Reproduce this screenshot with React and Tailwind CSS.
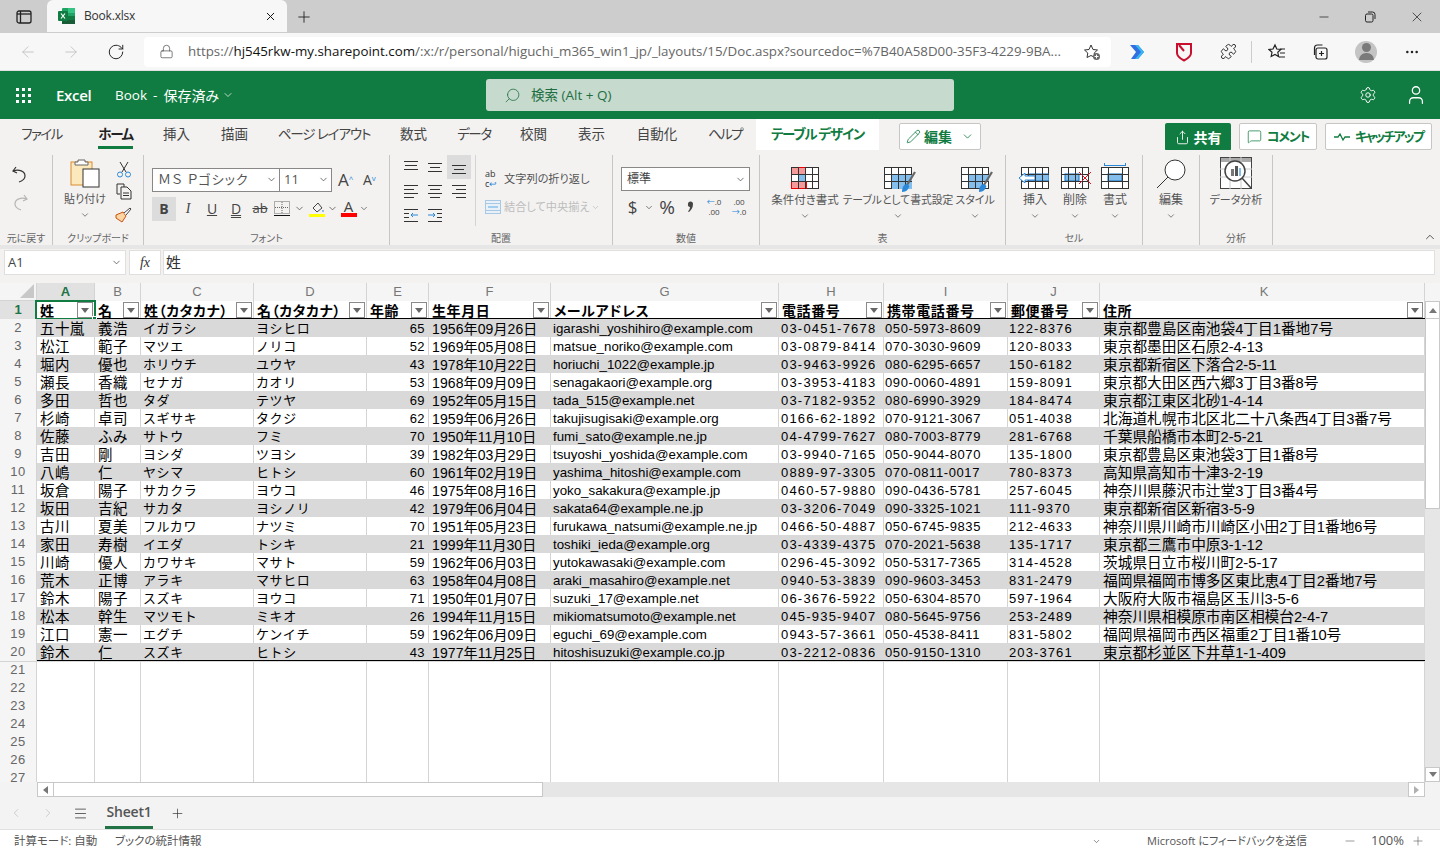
import React from "react";
import { ArrowLeft, ArrowRight, RotateCw, Lock, X, Plus, Minus, Settings, User, Search, ChevronDown, ChevronUp, ChevronLeft, ChevronRight, Puzzle, Pencil, Menu, MoreHorizontal, MessageSquare, Share } from "lucide-react";

const ui = "font-['Open_Sans','Noto_Sans_CJK_JP',sans-serif] [font-feature-settings:'palt']";
const Chev = ({ c = "text-[#444]" }) => <ChevronDown size={11} strokeWidth={1.6} className={c} />;

const widths = [58, 46, 113, 113, 62, 122, 228, 105, 124, 92, 325];
const letters = ["A", "B", "C", "D", "E", "F", "G", "H", "I", "J", "K"];
const heads = ["姓", "名", "姓（カタカナ）", "名（カタカナ）", "年齢", "生年月日", "メールアドレス", "電話番号", "携帯電話番号", "郵便番号", "住所"];
const cellCls = [
  "text-[14.5px] tracking-[0.4px] pl-[3px]",
  "text-[14.5px] tracking-[0.4px] pl-[3px]",
  "text-[13px] tracking-[0.6px] pl-[2px]",
  "text-[13px] tracking-[0.6px] pl-[2px]",
  "text-[13px] tracking-[0.4px] text-right pr-[3px]",
  "text-[14px] tracking-[0.1px] pl-[3px]",
  "text-[13.3px] tracking-[0px] pl-[2px]",
  "text-[13px] tracking-[1.2px] pl-[2px]",
  "text-[13px] tracking-[0.6px] pl-[1px]",
  "text-[13px] tracking-[1.1px] pl-[1px]",
  "text-[14.7px] tracking-[0px] pl-[3px]",
];
const data = `五十嵐|義浩|イガラシ|ヨシヒロ|65|1956年09月26日|igarashi_yoshihiro@example.com|03-0451-7678|050-5973-8609|122-8376|東京都豊島区南池袋4丁目1番地7号
松江|範子|マツエ|ノリコ|52|1969年05月08日|matsue_noriko@example.com|03-0879-8414|070-3030-9609|120-8033|東京都墨田区石原2-4-13
堀内|優也|ホリウチ|ユウヤ|43|1978年10月22日|horiuchi_1022@example.jp|03-9463-9926|080-6295-6657|150-6182|東京都新宿区下落合2-5-11
瀬長|香織|セナガ|カオリ|53|1968年09月09日|senagakaori@example.org|03-3953-4183|090-0060-4891|159-8091|東京都大田区西六郷3丁目3番8号
多田|哲也|タダ|テツヤ|69|1952年05月15日|tada_515@example.net|03-7182-9352|080-6990-3929|184-8474|東京都江東区北砂1-4-14
杉崎|卓司|スギサキ|タクジ|62|1959年06月26日|takujisugisaki@example.org|0166-62-1892|070-9121-3067|051-4038|北海道札幌市北区北二十八条西4丁目3番7号
佐藤|ふみ|サトウ|フミ|70|1950年11月10日|fumi_sato@example.ne.jp|04-4799-7627|080-7003-8779|281-6768|千葉県船橋市本町2-5-21
吉田|剛|ヨシダ|ツヨシ|39|1982年03月29日|tsuyoshi_yoshida@example.com|03-9940-7165|050-9044-8070|135-1800|東京都豊島区東池袋3丁目1番8号
八嶋|仁|ヤシマ|ヒトシ|60|1961年02月19日|yashima_hitoshi@example.com|0889-97-3305|070-0811-0017|780-8373|高知県高知市十津3-2-19
坂倉|陽子|サカクラ|ヨウコ|46|1975年08月16日|yoko_sakakura@example.jp|0460-57-9880|090-0436-5781|257-6045|神奈川県藤沢市辻堂3丁目3番4号
坂田|吉紀|サカタ|ヨシノリ|42|1979年06月04日|sakata64@example.ne.jp|03-3206-7049|090-3325-1021|111-9370|東京都新宿区新宿3-5-9
古川|夏美|フルカワ|ナツミ|70|1951年05月23日|furukawa_natsumi@example.ne.jp|0466-50-4887|050-6745-9835|212-4633|神奈川県川崎市川崎区小田2丁目1番地6号
家田|寿樹|イエダ|トシキ|21|1999年11月30日|toshiki_ieda@example.org|03-4339-4375|070-2021-5638|135-1717|東京都三鷹市中原3-1-12
川崎|優人|カワサキ|マサト|59|1962年06月03日|yutokawasaki@example.com|0296-45-3092|050-5317-7365|314-4528|茨城県日立市桜川町2-5-17
荒木|正博|アラキ|マサヒロ|63|1958年04月08日|araki_masahiro@example.net|0940-53-3839|090-9603-3453|831-2479|福岡県福岡市博多区東比恵4丁目2番地7号
鈴木|陽子|スズキ|ヨウコ|71|1950年01月07日|suzuki_17@example.net|06-3676-5922|050-6304-8570|597-1964|大阪府大阪市福島区玉川3-5-6
松本|幹生|マツモト|ミキオ|26|1994年11月15日|mikiomatsumoto@example.net|045-935-9407|080-5645-9756|253-2489|神奈川県相模原市南区相模台2-4-7
江口|憲一|エグチ|ケンイチ|59|1962年06月09日|eguchi_69@example.com|0943-57-3661|050-4538-8411|831-5802|福岡県福岡市西区福重2丁目1番10号
鈴木|仁|スズキ|ヒトシ|43|1977年11月25日|hitoshisuzuki@example.co.jp|03-2212-0836|050-9150-1310|203-3761|東京都杉並区下井草1-1-409`.split("\n").map((l) => l.split("|"));

const gridCols = "grid grid-cols-[37px_58px_46px_113px_113px_62px_122px_228px_105px_124px_92px_325px]";

function XlsIcon() {
  return (
    <svg width="18" height="16" viewBox="0 0 18 16">
      <rect x="4" y="0" width="13" height="16" rx="1" fill="#21a366" />
      <rect x="10" y="0" width="7" height="5" fill="#33c481" />
      <rect x="10" y="8" width="7" height="4" fill="#107c41" />
      <rect x="4" y="12" width="13" height="4" fill="#185c37" />
      <rect x="0" y="3" width="10" height="10" rx="1" fill="#107c41" />
      <path d="M3 5.5l4 5M7 5.5l-4 5" stroke="#fff" strokeWidth="1.2" />
    </svg>
  );
}

function TitleBar() {
  return (
    <div className="flex h-[33px] bg-[#cdcdcd] items-end shrink-0">
      <div className="w-[47px] h-full flex items-center justify-center">
        <svg width="16" height="14" viewBox="0 0 16 14" fill="none" stroke="#222" strokeWidth="1.3"><rect x="1" y="1" width="14" height="12" rx="2" /><path d="M4.5 1v12" /><path d="M1 4h14" /></svg>
      </div>
      <div className="w-[240px] h-[32px] mb-[1px] bg-[#f7f7f7] rounded-t-[6px] flex items-center pl-[11px] pr-[10px]">
        <XlsIcon />
        <span className={`ml-[8px] flex-1 text-[12px] text-[#333] tracking-[-0.2px] ${ui}`}>Book.xlsx</span>
        <X size={13} strokeWidth={1.8} className="text-[#111]" />
      </div>
      <div className="w-[34px] h-full flex items-center justify-center"><Plus size={18} strokeWidth={1.2} className="text-[#222]" /></div>
      <div className="flex-1" />
      <div className="h-full flex items-center pr-[15px] gap-[33px] text-[#222]">
        <Minus size={14} strokeWidth={1.3} />
        <svg width="12" height="12" viewBox="0 0 12 12" fill="none" stroke="#222" strokeWidth="1"><rect x="1.5" y="3" width="7.5" height="8" rx="1.5" /><path d="M4 1h4.5A2.5 2.5 0 0 1 11 3.5V8" /></svg>
        <X size={16} strokeWidth={1.1} />
      </div>
    </div>
  );
}

function AddrBar() {
  return (
    <div className="flex h-[38px] bg-[#f7f7f7] items-center shrink-0 border-b border-[#e0e0e0]">
      <div className="w-[144px] flex items-center pl-[19px]">
        <ArrowLeft size={18} strokeWidth={1.1} className="text-[#bdbdbd]" />
        <ArrowRight size={18} strokeWidth={1.1} className="text-[#bdbdbd] ml-[25px]" />
        <RotateCw size={18} strokeWidth={1.3} className="text-[#222] ml-[27px]" />
      </div>
      <div className="w-[967px] h-[30px] bg-white rounded-[4px] flex items-center pl-[15px] pr-[10px]">
        <Lock size={15} strokeWidth={1.1} className="text-[#444]" />
        <span className="ml-[14px] flex-1 text-[13.34px] text-[#666] whitespace-nowrap overflow-hidden font-['Open_Sans',sans-serif]">
          https://<span className="text-[#111]">hj545rkw-my.sharepoint.com</span>/:x:/r/personal/higuchi_m365_win1_jp/_layouts/15/Doc.aspx?sourcedoc=%7B40A58D00-35F3-4229-9BA...
        </span>
        <svg width="18" height="18" viewBox="0 0 18 18" fill="none" stroke="#333" strokeWidth="1" className="ml-[14px]"><path d="M8 2l2 4.5 4.5.5-3.300 3 .8 4.500L8 12.500 4 14.500l.8-4.500L1.500 7 6 6.500z" /><circle cx="13.500" cy="13.500" r="3.500" fill="#666" stroke="none" /><path d="M13.500 11.500v4M11.500 13.500h4" stroke="#fff" /></svg>
      </div>
      <div className="flex-1 flex items-center pl-[19px]">
        <svg width="18" height="16" viewBox="0 0 18 16"><path d="M0 1h8l6 7-6 7H1l5-7z" fill="#2f6fe0" /><path d="M8 1l6 7-6 7H5l6-7-6-7z" fill="#38b6f2" /></svg>
        <svg width="18" height="20" viewBox="0 0 18 20" fill="none" className="ml-[27px]"><path d="M2 2h14v9c0 4-4 6-7 7.500C6 17 2 15 2 11z" stroke="#c8102e" strokeWidth="2" /><path d="M4 3l5 6" stroke="#c8102e" strokeWidth="2" /></svg>
        <Puzzle size={17} strokeWidth={1.3} className="ml-[27px] text-[#222]" />
        <div className="w-[1px] h-[22px] bg-[#ccc] ml-[14px]" />
        <svg width="18" height="18" viewBox="0 0 18 18" fill="none" stroke="#222" strokeWidth="1.2" className="ml-[16px]"><path d="M7 2l1.800 4 4 .5-3 2.800.8 4.200L7 11.500 3.200 13.500 4 9.300 1 6.500l4-.5z" /><path d="M12 6h5M12 10h5M11 14h6" /></svg>
        <svg width="18" height="18" viewBox="0 0 18 18" fill="none" stroke="#222" strokeWidth="1.2" className="ml-[25px]"><rect x="5" y="5" width="11" height="11" rx="2" /><path d="M3.500 12V5a3 3 0 0 1 3-3h5" /><path d="M10.500 8v5M8 10.500h5" /></svg>
        <div className="ml-[26px] w-[22px] h-[22px] rounded-full bg-[#c4c4c4] flex flex-col items-center justify-center overflow-hidden">
          <div className="w-[9px] h-[9px] rounded-full bg-[#7a7a7a]" />
          <div className="w-[15px] h-[7px] rounded-t-full bg-[#7a7a7a] mt-[1px]" />
        </div>
        <MoreHorizontal size={16} strokeWidth={1.8} className="ml-[27px] text-[#222]" />
      </div>
    </div>
  );
}

function GreenBar() {
  return (
    <div className={`flex h-[48px] bg-[#107c41] items-center text-white shrink-0 ${ui}`}>
      <div className="w-[47px] flex justify-center">
        <div className="grid grid-cols-3 gap-[3px]">
          {Array.from({ length: 9 }).map((_, i) => <div key={i} className="w-[3px] h-[3px] bg-white" />)}
        </div>
      </div>
      <span className="w-[68px] pl-[9px] text-[15px] font-semibold tracking-[-0.3px]">Excel</span>
      <span className="w-[371px] text-[13.5px] flex items-center">Book<span className="mx-[6px]">-</span><span className="text-[14px]">保存済み</span><ChevronDown size={12} strokeWidth={1.4} className="ml-[3px]" /></span>
      <div className="w-[468px] h-[32px] rounded-[3px] bg-[#c6dacd] flex items-center pl-[18px] text-[#1e6e42] text-[13.5px]">
        <Search size={17} strokeWidth={1.1} className="scale-x-[-1]" />
        <span className="ml-[10px]">検索 (Alt + Q)</span>
      </div>
      <div className="flex-1 flex justify-end items-center pr-[13px] gap-[28px]">
        <Settings size={18} strokeWidth={1.3} />
        <User size={22} strokeWidth={1.4} />
      </div>
    </div>
  );
}

const Tab = ({ w, children, active, t = "" }) => (
  <div className={`${w} h-full flex flex-col items-center justify-center relative shrink-0`}>
    <span className={`${active ? "text-[13.5px] text-[#222] font-bold whitespace-nowrap" : "text-[13.5px] text-[#444] whitespace-nowrap"} ${t}`}>{children}</span>
    {active && <div className="absolute bottom-[1px] left-0 right-0 h-[3px] bg-[#107c41]" />}
  </div>
);

function TabRow() {
  return (
    <div className={`flex h-[31px] bg-[#f3f2f1] items-stretch pl-[22px] shrink-0 ${ui}`}>
      <Tab w="w-[39px]" t="tracking-[-1.6px]">ファイル</Tab>
      <Tab w="w-[35px] ml-[37px]" t="tracking-[-1.3px]" active>ホーム</Tab>
      <Tab w="w-[27px] ml-[30px]">挿入</Tab>
      <Tab w="w-[27px] ml-[31px]">描画</Tab>
      <Tab w="w-[92px] ml-[30px]" t="tracking-[-1.1px]">ページ レイアウト</Tab>
      <Tab w="w-[27px] ml-[30px]">数式</Tab>
      <Tab w="w-[34px] ml-[30px]" t="tracking-[-1.3px]">データ</Tab>
      <Tab w="w-[27px] ml-[29px]">校閲</Tab>
      <Tab w="w-[27px] ml-[31px]">表示</Tab>
      <Tab w="w-[40px] ml-[32px]">自動化</Tab>
      <Tab w="w-[34px] ml-[31px]" t="tracking-[-1.7px]">ヘルプ</Tab>
      <div className="ml-[14px] w-[123px] bg-white flex items-center justify-center text-[13.5px] font-bold text-[#107c41] whitespace-nowrap tracking-[-1.3px]">テーブル デザイン</div>
      <div className="ml-[20px] mt-[4px] w-[82px] h-[27px] bg-white border border-[#c8c6c4] rounded-[2px] flex items-center justify-center gap-[3px] text-[#107c41] text-[14px] font-bold">
        <Pencil size={15} strokeWidth={1.3} />編集<ChevronDown size={13} strokeWidth={1.5} className="ml-[6px]" />
      </div>
      <div className="ml-[184px] mt-[4px] w-[66px] h-[28px] bg-[#107c41] rounded-[2px] flex items-center justify-center gap-[4px] text-white text-[14px] font-bold">
        <Share size={15} strokeWidth={1.4} />共有
      </div>
      <div className="ml-[8px] mt-[4px] w-[78px] h-[27px] bg-white border border-[#c8c6c4] rounded-[2px] flex items-center justify-center gap-[5px] text-[#107c41] text-[13px] font-bold whitespace-nowrap tracking-[-1.2px]">
        <MessageSquare size={15} strokeWidth={1.2} />コメント
      </div>
      <div className="ml-[8px] mt-[4px] w-[107px] h-[27px] bg-white border border-[#c8c6c4] rounded-[2px] flex items-center justify-center gap-[5px] text-[#107c41] text-[13px] font-bold whitespace-nowrap tracking-[-1.9px]">
        <svg width="16" height="10" viewBox="0 0 16 10" fill="none" stroke="#107c41" strokeWidth="1.300"><path d="M0 5h4l2-3 3 6 2-3h5" /></svg>キャッチアップ
      </div>
    </div>
  );
}

const Group = ({ w, label, children }) => (
  <div className={`${w} h-[90px] flex flex-col shrink-0 border-r border-[#c8c6c4]`}>
    <div className="flex-1 min-h-0 relative">{children}</div>
    <div className="h-[14px] text-[10px] leading-[14px] text-[#666] text-center whitespace-nowrap">{label}</div>
  </div>
);

const TinyIcon = ({ w = 24, children, cls = "" }) => (
  <div className={`h-[24px] flex items-center justify-center shrink-0 ${cls}`} style={{ width: w }}>{children}</div>
);

const AlignIcon = ({ lines, children }) => (
  <svg width="16" height="14" viewBox="0 0 16 14" stroke="#333" strokeWidth="1" fill="none">
    {lines.map((l, i) => <path key={i} d={`M${l[0]} ${l[1] + 0.5}h${l[2]}`} />)}
    {children}
  </svg>
);

const BigBtn = ({ w, label, icon, noChev, size = "text-[12px]" }) => (
  <div className={`${w} flex flex-col items-center shrink-0`}>
    <div className="h-[33px] flex items-end justify-center">{icon}</div>
    <div className={`mt-[2px] ${size} leading-[18px] text-[#555] whitespace-nowrap`}>{label}</div>
    {!noChev && <ChevronDown size={10} strokeWidth={1.6} className="mt-[2px] text-[#444]" />}
  </div>
);

const GridSvg = ({ children, w = 36, h = 27, cols = [9, 18, 27], rows = [9, 18] }) => (
  <svg width={w} height={h} viewBox={`0 0 ${w} ${h}`} fill="none">
    <rect x=".5" y=".5" width={w - 1} height={h - 1} fill="#fff" stroke="#333" />
    {children}
    {cols.map((c) => <path key={c} d={`M${c}.5 0v${h}`} stroke="#333" />)}
    {rows.map((r) => <path key={r} d={`M0 ${r}.5h${w}`} stroke="#333" />)}
  </svg>
);

const Brush = () => (
  <svg width="16" height="22" viewBox="0 0 16 22" className="absolute right-[-5px] bottom-[-4px]"><path d="M14 1L6 14" stroke="#666" strokeWidth="2.200" /><path d="M1 21c0-5 2-8 5-8l2.500 2c-1 3-3 6-7.500 6z" fill="#2b88d8" /></svg>
);

function Ribbon() {
  return (
    <div className={`h-[95px] bg-[#f3f2f1] flex pt-[5px] shrink-0 relative ${ui}`}>
      <Group w="w-[53px]" label="元に戻す">
        <div className="flex flex-col items-center pt-[10px] pr-[12px] gap-[10px]">
          <svg width="18" height="18" viewBox="0 0 18 18" fill="none" stroke="#333" strokeWidth="1.200"><path d="M5 2L2 6l4 2" /><path d="M2 6c6-2 12 0 12 5 0 3-3 5-6 6" /></svg>
          <svg width="18" height="18" viewBox="0 0 18 18" fill="none" stroke="#b5b5b5" strokeWidth="1.200"><path d="M13 2l3 4-4 2" /><path d="M16 6C10 4 4 6 4 11c0 3 3 5 6 6" /></svg>
        </div>
      </Group>
      <Group w="w-[91px]" label="クリップボード">
        <div className="flex pl-[10px]">
          <BigBtn w="w-[44px]" size="text-[11px]" label="貼り付け" icon={
            <svg width="30" height="30" viewBox="0 0 30 30" fill="none"><rect x="1" y="4" width="21" height="23" fill="#fce8bd" stroke="#d88c2e" /><path d="M8 4V2h7v2h3v3H5V4z" fill="#fff" stroke="#666" /><rect x="13" y="11" width="16" height="18" fill="#fff" stroke="#333" /></svg>} />
          <div className="ml-[8px] flex flex-col items-center">
            <svg width="16" height="17" viewBox="0 0 16 17" fill="none" stroke="#333" className="mt-[6px]"><path d="M4 1l6 10M12 1L6 11" /><circle cx="4" cy="13.500" r="2.500" stroke="#2b88d8" /><circle cx="12" cy="13.500" r="2.500" stroke="#2b88d8" /></svg>
            <svg width="16" height="17" viewBox="0 0 16 17" fill="none" stroke="#333" className="mt-[5px]"><path d="M4 11H1V1h7v3" /><path d="M5 4h6l4 4v8H5z" /><path d="M7 10h6M7 12.500h6" /></svg>
            <svg width="17" height="17" viewBox="0 0 17 17" fill="none" className="mt-[6px]"><path d="M1 9l7-3 3 4-4 6-6-4z" fill="#fbd5a2" stroke="#ca5010" /><path d="M9 7l6-5 1 1-5 6" fill="#fff" stroke="#444" /></svg>
          </div>
        </div>
      </Group>
      <Group w="w-[246px]" label="フォント">
        <div className="pl-[8px] pt-[12px]">
          <div className="flex items-center">
            <div className="w-[128px] h-[24px] bg-white border border-[#8a8886] flex items-center pl-[5px] pr-[2px] text-[13px] text-[#555] tracking-[1.100px] [font-feature-settings:'normal']"><span className="flex-1">ＭＳ Ｐゴシック</span><Chev /></div>
            <div className="w-[52px] h-[24px] bg-white border border-[#8a8886] border-l-0 flex items-center pl-[4px] pr-[2px] text-[13px] text-[#555]"><span className="flex-1">11</span><Chev /></div>
            <span className="ml-[6px] text-[17px] text-[#444] w-[22px]">A<sup className="text-[#2b88d8] text-[8px]">^</sup></span>
            <span className="ml-[3px] text-[14px] text-[#444]">A<sup className="text-[#2b88d8] text-[8px]">v</sup></span>
          </div>
          <div className="flex items-center mt-[4px] text-[14px] text-[#444]">
            <TinyIcon cls="bg-[#dcdcdc] font-bold">B</TinyIcon>
            <TinyIcon cls="italic font-['Liberation_Serif',serif]">I</TinyIcon>
            <TinyIcon cls="underline">U</TinyIcon>
            <TinyIcon cls="underline decoration-double">D</TinyIcon>
            <TinyIcon cls="line-through text-[13px]">ab</TinyIcon>
            <TinyIcon w={20}><svg width="16" height="15" viewBox="0 0 16 15" fill="none"><rect x=".5" y=".5" width="15" height="12" stroke="#666" strokeDasharray="1 1" /><path d="M8 1v11M1 6.500h14" stroke="#666" strokeDasharray="1 1" /><path d="M0 14.500h16" stroke="#111" /></svg></TinyIcon>
            <TinyIcon w={14}><Chev /></TinyIcon>
            <TinyIcon w={21}><svg width="16" height="16" viewBox="0 0 16 16" fill="none"><path d="M4 7l5-5 4 5-5 4z" stroke="#444" /><path d="M14 9v2" stroke="#2b88d8" /><rect x="0" y="13" width="16" height="3" fill="#ffff00" /></svg></TinyIcon>
            <TinyIcon w={11}><Chev /></TinyIcon>
            <TinyIcon w={21}><div className="flex flex-col items-center text-[15px] leading-[13px] text-[#444]">A<div className="w-[16px] h-[4px] bg-[#ff0000]" /></div></TinyIcon>
            <TinyIcon w={10}><Chev /></TinyIcon>
          </div>
        </div>
      </Group>
      <Group w="w-[223px]" label="配置">
        <div className="flex">
          <div className="w-[86px] border-r border-[#d4d4d4] h-[71px] grid grid-cols-[24px_24px_24px] grid-rows-[24px_24px_24px] pl-[9px] items-center justify-items-center">
            <AlignIcon lines={[[1, 1, 14], [2, 5, 12], [1, 9, 14]]} />
            <AlignIcon lines={[[1, 3, 14], [3, 7, 10], [1, 11, 14]]} />
            <div className="w-[24px] h-[24px] bg-[#dcdcdc] flex items-center justify-center"><AlignIcon lines={[[1, 5, 14], [3, 9, 10], [1, 13, 14]]} /></div>
            <AlignIcon lines={[[1, 1, 14], [1, 5, 10], [1, 9, 14], [1, 13, 10]]} />
            <AlignIcon lines={[[1, 1, 14], [3, 5, 10], [1, 9, 14], [3, 13, 10]]} />
            <AlignIcon lines={[[1, 1, 14], [5, 5, 10], [1, 9, 14], [5, 13, 10]]} />
            <AlignIcon lines={[[1, 1, 14], [1, 5, 5], [1, 9, 5], [1, 13, 14]]}><path d="M8 7h7M10 5l-2 2 2 2" stroke="#2b88d8" /></AlignIcon>
            <AlignIcon lines={[[1, 1, 14], [10, 5, 5], [10, 9, 5], [1, 13, 14]]}><path d="M1 7h7M6 5l2 2-2 2" stroke="#2b88d8" /></AlignIcon>
            <span />
          </div>
          <div className="pl-[9px] pt-[12px] text-[11.2px] text-[#555]">
            <div className="flex items-center h-[24px]"><span className="w-[16px] text-[9px] leading-[10px] text-[#333] whitespace-nowrap">ab<br />c<span className="text-[#2b88d8]">↩</span></span><span className="ml-[3px] whitespace-nowrap">文字列の折り返し</span></div>
            <div className="flex items-center h-[24px] mt-[4px] text-[#bdbdbd]"><svg width="16" height="14" viewBox="0 0 16 14" fill="none"><rect x=".5" y=".5" width="15" height="13" fill="#e8f1f8" stroke="#a8c8e4" /><path d="M0 3.500h16M0 10.500h16" stroke="#a8c8e4" /><path d="M3 7h10" stroke="#5ea9e4" /></svg><span className="ml-[3px] whitespace-nowrap">結合して中央揃え</span><ChevronDown size={9} className="ml-[2px]" /></div>
          </div>
        </div>
      </Group>
      <Group w="w-[147px]" label="数値">
        <div className="pl-[8px] pt-[12px]">
          <div className="w-[129px] h-[24px] bg-white border border-[#8a8886] flex items-center pl-[5px] pr-[3px] text-[12px] text-[#444]"><span className="flex-1">標準</span><Chev /></div>
          <div className="flex items-center mt-[4px] text-[#444] h-[24px]">
            <span className="w-[23px] text-center text-[17px]">$</span>
            <TinyIcon w={10}><Chev /></TinyIcon>
            <span className="w-[26px] text-center text-[19px]">%</span>
            <div className="w-[21px] flex justify-center"><svg width="7" height="12" viewBox="0 0 7 12"><path d="M1 3a2.500 2.500 0 1 1 5 0c0 4-2 6-4 8l-1-.6c1-1.200 2-2.400 2-4.400A2.500 2.500 0 0 1 1 3z" fill="#444" /></svg></div>
            <span className="w-[26px] text-[8px] leading-[10px] text-center whitespace-nowrap"><span className="text-[#2b88d8]">←</span>.0<br />.00</span>
            <span className="w-[24px] text-[8px] leading-[10px] text-center whitespace-nowrap">.00<br /><span className="text-[#2b88d8]">→</span>.0</span>
          </div>
        </div>
      </Group>
      <Group w="w-[246px]" label="表">
        <div className="flex pl-[9px] pt-[1px]">
          <BigBtn w="w-[72px]" size="text-[11.5px]" label="条件付き書式" icon={
            <GridSvg w={28} h={22} cols={[7, 14, 21]} rows={[7, 14]}>
              <rect x="1" y="1" width="13" height="6" fill="#f49a9a" /><rect x="7" y="8" width="7" height="6" fill="#83beec" /><rect x="1" y="15" width="14" height="6" fill="#f49a9a" />
              <rect x="7.500" y=".5" width="7" height="7" stroke="#e00" /><rect x=".5" y="14.500" width="15" height="7" stroke="#e00" />
            </GridSvg>} />
          <BigBtn w="w-[114px]" size="text-[10.8px]" label="テーブルとして書式設定" icon={
            <div className="relative"><GridSvg w={28} h={22} cols={[7, 14, 21]} rows={[7, 14]}><rect x="7" y="7" width="21" height="15" fill="#83beec" /></GridSvg><Brush /></div>} />
          <BigBtn w="w-[40px]" size="text-[11px]" label="スタイル" icon={
            <div className="relative"><GridSvg w={28} h={22} cols={[7, 14, 21]} rows={[7, 14]}><rect x="7" y="7" width="21" height="7" fill="#83beec" /><rect x="7" y="7" width="14" height="14" fill="#83beec" /></GridSvg><Brush /></div>} />
        </div>
      </Group>
      <Group w="w-[137px]" label="セル">
        <div className="flex pl-[9px] pt-[1px]">
          <BigBtn w="w-[40px]" label="挿入" icon={<div className="relative"><GridSvg w={28} h={22} cols={[7, 14, 21]} rows={[7, 14]}><rect x="7" y="7" width="21" height="7" fill="#83beec" stroke="#106ebe" /></GridSvg><svg width="16" height="10" viewBox="0 0 16 10" className="absolute left-[-2px] top-[6px]"><path d="M6 0L0 5l6 5V7h10V3H6z" fill="#fff" stroke="#2b88d8" /></svg></div>} />
          <BigBtn w="w-[40px]" label="削除" icon={<div className="relative"><GridSvg w={28} h={22} cols={[7, 14, 21]} rows={[7, 14]}><rect x="4" y="7" width="14" height="7" fill="#83beec" stroke="#106ebe" /></GridSvg><svg width="12" height="12" viewBox="0 0 12 12" className="absolute right-[-2px] top-[5px]"><path d="M0 0l12 12M12 0L0 12" stroke="#e81123" /></svg></div>} />
          <BigBtn w="w-[40px]" label="書式" icon={<div className="flex flex-col items-center"><div className="w-[22px] h-[3px] border-x border-b border-[#2b88d8] mb-[1px]" /><GridSvg w={28} h={22} cols={[7, 21]} rows={[7, 14]}><rect x="7" y="7" width="14" height="7" fill="#83beec" stroke="#106ebe" /></GridSvg></div>} />
        </div>
      </Group>
      <Group w="w-[57px]" label="">
        <div className="flex justify-center pt-[1px]">
          <BigBtn w="w-[40px]" label="編集" icon={<svg width="30" height="30" viewBox="0 0 30 30" fill="none" stroke="#333"><circle cx="19" cy="11" r="10" fill="#fff" /><path d="M12 18L1 29" /></svg>} />
        </div>
      </Group>
      <Group w="w-[73px]" label="分析">
        <div className="flex justify-center pt-[1px]">
          <BigBtn w="w-[60px]" size="text-[11px]" noChev label="データ分析" icon={
            <svg width="32" height="32" viewBox="0 0 32 32" fill="none"><rect x=".5" y=".5" width="31" height="31" fill="#fff" stroke="#444" /><rect x="1" y="1" width="30" height="4" fill="#aaa" /><path d="M0 12h32M0 20h32M10 0v32M21 0v32" stroke="#ccc" /><circle cx="15" cy="14" r="10" fill="#fff" stroke="#444" strokeWidth="1.500" /><path d="M22 21l9 10" stroke="#444" strokeWidth="1.500" /><rect x="11" y="12" width="3" height="7" fill="#777" /><rect x="15" y="9" width="3" height="10" fill="#555" /><rect x="19" y="11" width="2" height="8" fill="#83beec" /></svg>} />
        </div>
      </Group>
      <ChevronUp size={14} strokeWidth={1.4} className="absolute right-[3px] bottom-[1px] text-[#333]" />
    </div>
  );
}

function FormulaBar() {
  return (
    <div className={`h-[38px] bg-[#f3f2f1] border-t-[4px] border-[#e6e6e6] pt-[1px] flex items-start px-[4px] shrink-0 ${ui}`}>
      <div className="w-[122px] h-[25px] bg-white border border-[#e1dfdd] flex items-center pl-[3px] pr-[3px] text-[13px] text-[#444]"><span className="flex-1">A1</span><Chev /></div>
      <div className="w-[32px] h-[25px] ml-[3px] bg-white border border-[#e1dfdd] flex items-center justify-center italic text-[14px] font-['Liberation_Serif',serif] text-[#333]">fx</div>
      <div className="flex-1 h-[25px] ml-[2px] mr-[1px] bg-white border border-[#e1dfdd] flex items-center pl-[2px] text-[15px] text-[#333]">姓</div>
    </div>
  );
}

const FilterBtn = () => (
  <div className="w-[16px] h-[16px] mr-[1px] border border-[#8a8a8a] bg-white flex items-center justify-center shrink-0">
    <div className="w-0 h-0 border-x-[4px] border-x-transparent border-t-[5px] border-t-[#666]" />
  </div>
);

function Sheet() {
  const cellFont = "font-['Liberation_Sans','Noto_Sans_CJK_JP',sans-serif]";
  const emptyRows = [21, 22, 23, 24, 25, 26, 27];
  return (
    <div className={`h-[514px] shrink-0 flex flex-col overflow-hidden text-black ${cellFont}`}>
      <div className="flex-1 min-h-0 flex overflow-hidden">
        <div className="w-[1425px] shrink-0 overflow-hidden">
          <div className={`${gridCols} h-[18px] bg-[#f5f5f5]`}>
            <div className="bg-[#f5f5f5] border-r border-b border-[#d4d4d4] flex items-end justify-end pr-[2px] pb-[2px]">
              <div className="w-0 h-0 border-l-[14px] border-l-transparent border-b-[14px] border-b-[#c8c8c8]" />
            </div>
            {letters.map((l, i) => (
              <div key={l} className={`border-r border-[#d4d4d4] text-center text-[13px] leading-[18px] ${i === 0 ? "bg-[#e1e1e1] text-[#217346] font-bold" : "text-[#777]"} ${i === 10 ? "pl-[4px]" : ""}`}>{l}</div>
            ))}
          </div>
          <div className={`${gridCols} h-[18px] relative`}>
            <div className="bg-[#e1e1e1] text-[#217346] font-bold text-[13px] leading-[18px] text-center border-r border-[#d4d4d4]">1</div>
            {heads.map((h, i) => (
              <div key={h + i} className="bg-white border-r border-[#d4d4d4] flex items-center pl-[3px] overflow-hidden">
                <span className="flex-1 whitespace-nowrap font-bold text-[14px] leading-[18px] pt-[1px] tracking-[0.6px] [font-feature-settings:'palt']">{h}</span>
                <FilterBtn />
              </div>
            ))}
            <div className="absolute left-[37px] right-0 bottom-0 h-[1px] bg-black" />
            <div className="absolute left-[35px] top-[-1px] w-[61px] h-[20px] border-2 border-[#107c41] pointer-events-none">
              <div className="absolute right-[-3px] bottom-[-3px] w-[5px] h-[5px] bg-[#107c41] border border-white" />
            </div>
          </div>
          {data.map((r, ri) => (
            <div key={ri} className={`${gridCols} h-[18px] relative`}>
              <div className="bg-[#f5f5f5] text-[#666] text-[13px] leading-[18px] text-center border-r border-b border-[#d4d4d4] tracking-[0.5px]">{ri + 2}</div>
              {r.map((c, ci) => (
                <div key={ci} className={`${cellCls[ci]} leading-[18px] pt-[1px] whitespace-nowrap overflow-hidden border-r ${ri % 2 === 0 ? "bg-[#d9d9d9] border-[#d9d9d9]" : "bg-white border-[#d4d4d4]"}`}>{c}</div>
              ))}
              {ri === 18 && <div className="absolute left-[37px] right-0 bottom-0 h-[1px] bg-black" />}
            </div>
          ))}
          {emptyRows.map((n) => (
            <div key={n} className={`${gridCols} h-[18px]`}>
              <div className="bg-[#f5f5f5] text-[#666] text-[13px] leading-[18px] text-center border-r border-b border-[#d4d4d4] tracking-[0.5px]">{n}</div>
              {widths.map((_, i) => <div key={i} className="bg-white border-r border-b border-[#d4d4d4]" />)}
            </div>
          ))}
        </div>
        <div className="flex-1 flex flex-col pt-[18px] bg-[#f5f5f5]">
          <div className="h-[18px] bg-white border border-[#c8c8c8] flex items-center justify-center"><div className="w-0 h-0 border-x-[4px] border-x-transparent border-b-[5px] border-b-[#777]" /></div>
          <div className="h-[190px] bg-white border border-[#c8c8c8] border-t-0" />
          <div className="flex-1 bg-[#e6e6e6]" />
          <div className="h-[15px] bg-white border border-[#c8c8c8] flex items-center justify-center"><div className="w-0 h-0 border-x-[4px] border-x-transparent border-t-[5px] border-t-[#777]" /></div>
        </div>
      </div>
      <div className="h-[15px] flex bg-[#f3f3f3] shrink-0">
        <div className="w-[37px]" />
        <div className="w-[1388px] flex bg-[#e6e6e6]">
          <div className="w-[17px] bg-white border border-[#c8c8c8] flex items-center justify-center"><div className="w-0 h-0 border-y-[4px] border-y-transparent border-r-[5px] border-r-[#777]" /></div>
          <div className="w-[489px] bg-white border-y border-r border-[#c8c8c8]" />
          <div className="flex-1" />
          <div className="w-[17px] bg-white border border-[#c8c8c8] flex items-center justify-center"><div className="w-0 h-0 border-y-[4px] border-y-transparent border-l-[5px] border-l-[#b0b0b0]" /></div>
        </div>
      </div>
    </div>
  );
}

function SheetTabs() {
  return (
    <div className={`h-[33px] bg-[#f3f3f3] flex items-stretch border-b border-[#e1e1e1] shrink-0 ${ui}`}>
      <div className="w-[105px] flex items-center pl-[9px]">
        <ChevronLeft size={14} strokeWidth={1.1} className="text-[#b5b5b5]" />
        <ChevronRight size={14} strokeWidth={1.1} className="text-[#b5b5b5] ml-[18px]" />
        <Menu size={15} strokeWidth={1.2} className="text-[#333] ml-[18px]" />
      </div>
      <div className="w-[48px] relative flex items-center justify-center text-[14px] font-semibold text-[#555] tracking-[-0.2px] pb-[3px]">Sheet1<div className="absolute bottom-0 left-0 right-0 h-[3px] bg-[#217346]" /></div>
      <Plus size={15} strokeWidth={1.1} className="self-center ml-[17px] text-[#333]" />
    </div>
  );
}

function StatusBar() {
  return (
    <div className={`flex-1 min-h-0 bg-white flex items-center text-[11.5px] text-[#555] whitespace-nowrap ${ui}`}>
      <span className="ml-[14px] w-[101px] shrink-0">計算モード: 自動</span>
      <span className="w-[977px] shrink-0">ブックの統計情報</span>
      <div className="w-[55px] shrink-0"><ChevronDown size={9} strokeWidth={1.8} /></div>
      <span className="w-[196px] shrink-0 text-[11px]">Microsoft にフィードバックを送信</span>
      <Minus size={14} strokeWidth={1} className="shrink-0" />
      <span className="ml-[14px] w-[40px] shrink-0 text-[13px]">100%</span>
      <Plus size={14} strokeWidth={1} className="shrink-0" />
    </div>
  );
}

export default function App() {
  return (
    <div className="w-[1440px] h-[852px] overflow-hidden flex flex-col bg-white">
      <TitleBar />
      <AddrBar />
      <GreenBar />
      <TabRow />
      <Ribbon />
      <FormulaBar />
      <Sheet />
      <SheetTabs />
      <StatusBar />
    </div>
  );
}
